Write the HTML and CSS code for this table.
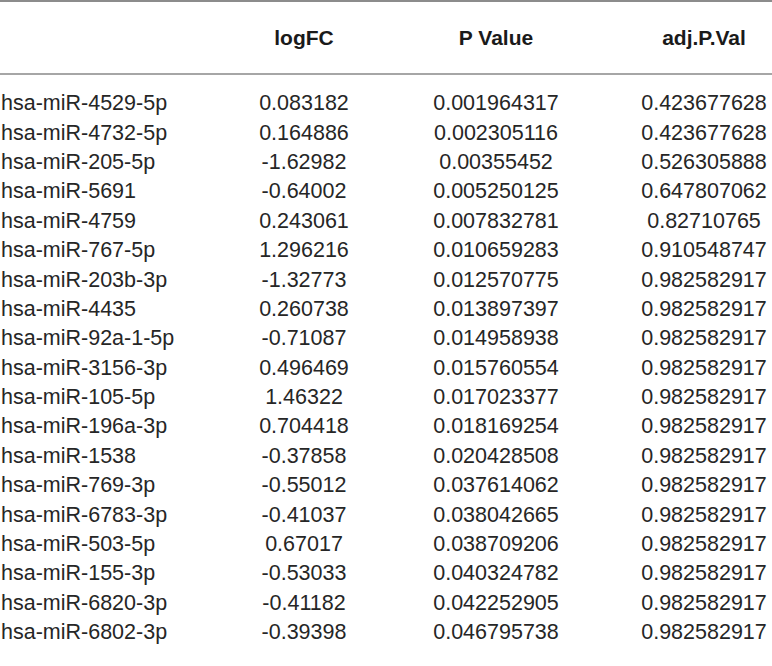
FILE: index.html
```html
<!DOCTYPE html>
<html>
<head>
<meta charset="utf-8">
<link rel="stylesheet" href="styles.css">
</head>
<body>
<div class="tbl">
  <div class="row head">
    <div class="c c1"></div>
    <div class="c c2">logFC</div>
    <div class="c c3">P Value</div>
    <div class="c c4">adj.P.Val</div>
  </div>
  <div class="body">
    <div class="row"><div class="c c1">hsa-miR-4529-5p</div><div class="c c2">0.083182</div><div class="c c3">0.001964317</div><div class="c c4">0.423677628</div></div>
    <div class="row"><div class="c c1">hsa-miR-4732-5p</div><div class="c c2">0.164886</div><div class="c c3">0.002305116</div><div class="c c4">0.423677628</div></div>
    <div class="row"><div class="c c1">hsa-miR-205-5p</div><div class="c c2">-1.62982</div><div class="c c3">0.00355452</div><div class="c c4">0.526305888</div></div>
    <div class="row"><div class="c c1">hsa-miR-5691</div><div class="c c2">-0.64002</div><div class="c c3">0.005250125</div><div class="c c4">0.647807062</div></div>
    <div class="row"><div class="c c1">hsa-miR-4759</div><div class="c c2">0.243061</div><div class="c c3">0.007832781</div><div class="c c4">0.82710765</div></div>
    <div class="row"><div class="c c1">hsa-miR-767-5p</div><div class="c c2">1.296216</div><div class="c c3">0.010659283</div><div class="c c4">0.910548747</div></div>
    <div class="row"><div class="c c1">hsa-miR-203b-3p</div><div class="c c2">-1.32773</div><div class="c c3">0.012570775</div><div class="c c4">0.982582917</div></div>
    <div class="row"><div class="c c1">hsa-miR-4435</div><div class="c c2">0.260738</div><div class="c c3">0.013897397</div><div class="c c4">0.982582917</div></div>
    <div class="row"><div class="c c1">hsa-miR-92a-1-5p</div><div class="c c2">-0.71087</div><div class="c c3">0.014958938</div><div class="c c4">0.982582917</div></div>
    <div class="row"><div class="c c1">hsa-miR-3156-3p</div><div class="c c2">0.496469</div><div class="c c3">0.015760554</div><div class="c c4">0.982582917</div></div>
    <div class="row"><div class="c c1">hsa-miR-105-5p</div><div class="c c2">1.46322</div><div class="c c3">0.017023377</div><div class="c c4">0.982582917</div></div>
    <div class="row"><div class="c c1">hsa-miR-196a-3p</div><div class="c c2">0.704418</div><div class="c c3">0.018169254</div><div class="c c4">0.982582917</div></div>
    <div class="row"><div class="c c1">hsa-miR-1538</div><div class="c c2">-0.37858</div><div class="c c3">0.020428508</div><div class="c c4">0.982582917</div></div>
    <div class="row"><div class="c c1">hsa-miR-769-3p</div><div class="c c2">-0.55012</div><div class="c c3">0.037614062</div><div class="c c4">0.982582917</div></div>
    <div class="row"><div class="c c1">hsa-miR-6783-3p</div><div class="c c2">-0.41037</div><div class="c c3">0.038042665</div><div class="c c4">0.982582917</div></div>
    <div class="row"><div class="c c1">hsa-miR-503-5p</div><div class="c c2">0.67017</div><div class="c c3">0.038709206</div><div class="c c4">0.982582917</div></div>
    <div class="row"><div class="c c1">hsa-miR-155-3p</div><div class="c c2">-0.53033</div><div class="c c3">0.040324782</div><div class="c c4">0.982582917</div></div>
    <div class="row"><div class="c c1">hsa-miR-6820-3p</div><div class="c c2">-0.41182</div><div class="c c3">0.042252905</div><div class="c c4">0.982582917</div></div>
    <div class="row"><div class="c c1">hsa-miR-6802-3p</div><div class="c c2">-0.39398</div><div class="c c3">0.046795738</div><div class="c c4">0.982582917</div></div>
  </div>
</div>
</body>
</html>
```
FILE: styles.css
```css
html, body {
  margin: 0;
  padding: 0;
  background: #fff;
}
.tbl {
  width: 772px;
  font-family: "Liberation Sans", Arial, sans-serif;
  font-size: 21.5px;
  color: #262626;
  border-top: 2px solid #8c8c8c;
}
.row {
  display: grid;
  grid-template-columns: 214px 180px 204px 174px;
  align-items: center;
  height: 29.4px;
  white-space: nowrap;
}
.head {
  height: 71px;
  font-size: 21px;
  font-weight: bold;
  color: #1a1a1a;
  border-bottom: 2px solid #a6a6a6;
}
.body {
  padding-top: 14px;
}
.c1 {
  text-align: left;
  padding-left: 1px;
}
.c2, .c3 {
  text-align: center;
}
.c4 {
  text-align: center;
  padding-left: 38px;
  padding-right: 0;
}
```
